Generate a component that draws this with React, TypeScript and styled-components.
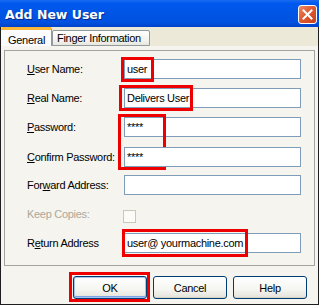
import React from 'react';
import styled, { createGlobalStyle } from 'styled-components';

const GlobalStyle = createGlobalStyle`
	html, body {
		margin: 0;
		padding: 0;
		background: #ffffff;
	}
	body {
		font-family: 'Liberation Sans', Arial, sans-serif;
		font-size: 11px;
		letter-spacing: -0.3px;
		color: #000;
	}
`;

interface RowDef {
	label: React.ReactNode;
	value?: string;
	disabled?: boolean;
	checkbox?: boolean;
	nudge?: number;
	mark?: { l: number; t: number; w: number; h: number };
}

const rows: RowDef[] = [
	{ label: <><u>U</u>ser Name:</>, value: 'user', mark: { l: -3, t: -2, w: 33, h: 25 } },
	{ label: <><u>R</u>eal Name:</>, value: 'Delivers User', mark: { l: -5, t: -3, w: 74, h: 26 } },
	{ label: <><u>P</u>assword:</>, value: '****', mark: { l: -6, t: -3, w: 48, h: 56 } },
	{ label: <><u>C</u>onfirm Password:</>, value: '****', nudge: 1 },
	{ label: <>For<u>w</u>ard Address:</>, value: '' },
	{ label: <>Keep Copies:</>, disabled: true, checkbox: true },
	{ label: <>R<u>e</u>turn Address</>, value: 'user@ yourmachine.com', mark: { l: -2, t: -4, w: 126, h: 28 } },
];

export default function App() {
	return (
		<>
			<GlobalStyle />
			<Window>
				<TitleBar>
					<Title>Add New User</Title>
					<CloseButton>
						<svg width='11' height='11' viewBox='0 0 11 11'>
							<path d='M1.5 1.5 L9.5 9.5 M9.5 1.5 L1.5 9.5' stroke='#fff' strokeWidth='2' strokeLinecap='square' />
						</svg>
					</CloseButton>
				</TitleBar>

				<Frame>
					<TabStrip>
						<Tab $active>General</Tab>
						<Tab>Finger Information</Tab>
					</TabStrip>

					<Body>
						<Panel>
							<Form>
								{rows.map((row, i) => (
									<React.Fragment key={i}>
										<Label $disabled={row.disabled} $nudge={row.nudge}>
											{row.label}
										</Label>
										<Cell $nudge={row.nudge}>
											{row.checkbox ? (
												<CheckBox />
											) : (
												<TextBox>{row.value}</TextBox>
											)}
											{row.mark && (
												<Highlight
													$l={row.mark.l}
													$t={row.mark.t}
													$w={row.mark.w}
													$h={row.mark.h}
												/>
											)}
										</Cell>
									</React.Fragment>
								))}
							</Form>
						</Panel>

						<ButtonBar>
							<ButtonSlot>
								<Button $default>OK</Button>
								<Highlight $l={-4} $t={-4} $w={81} $h={30} />
							</ButtonSlot>
							<Button>Cancel</Button>
							<Button>Help</Button>
						</ButtonBar>
					</Body>
				</Frame>
			</Window>
		</>
	);
}

const Window = styled.div`
	width: 319px;
	height: 305px;
	display: flex;
	flex-direction: column;
	overflow: hidden;
`;

const TitleBar = styled.div`
	height: 27px;
	flex: none;
	display: flex;
	align-items: center;
	justify-content: space-between;
	padding: 0 2px 0 5px;
	box-sizing: border-box;
	background: linear-gradient(
		#1a6cf0 0%,
		#0058ee 12%,
		#0055e5 50%,
		#0050de 85%,
		#0042c8 100%
	);
`;

const Title = styled.span`
	color: #fff;
	font-family: 'DejaVu Sans', 'Liberation Sans', sans-serif;
	font-weight: bold;
	font-size: 12.5px;
	letter-spacing: 0;
	text-shadow: 1px 1px 0 #0a2a8a;
	margin-top: 1px;
`;

const CloseButton = styled.div`
	width: 19px;
	height: 19px;
	box-sizing: border-box;
	border: 1px solid #fff;
	border-radius: 3px;
	background: linear-gradient(135deg, #ec8a6a 0%, #e05a32 45%, #c8401a 100%);
	display: flex;
	align-items: center;
	justify-content: center;
	margin-top: 1px;
`;

const Frame = styled.div`
	flex: 1;
	display: flex;
	flex-direction: column;
	border: 1px solid #1e1e1e;
	border-top: none;
`;

const TabStrip = styled.div`
	height: 19px;
	flex: none;
	display: flex;
	align-items: flex-end;
	background: #ece9d8;
`;

const Tab = styled.div<{ $active?: boolean }>`
	box-sizing: border-box;
	height: ${(p) => (p.$active ? '19px' : '16px')};
	width: ${(p) => (p.$active ? '51px' : '98px')};
	padding-left: ${(p) => (p.$active ? '7px' : '4px')};
	padding-top: ${(p) => (p.$active ? '4px' : '1px')};
	border: 1px solid #919b9c;
	border-top: ${(p) => (p.$active ? '3px solid #f9b838' : '1px solid #919b9c')};
	border-bottom: ${(p) => (p.$active ? 'none' : '1px solid #919b9c')};
	border-left: ${(p) => (p.$active ? 'none' : '1px solid #919b9c')};
	border-radius: 2px 2px 0 0;
	background: ${(p) =>
		p.$active ? '#fcfcfe' : 'linear-gradient(#ffffff, #f3f2ec 70%, #e6e5de)'};
	white-space: nowrap;
	font-size: 11px;
	line-height: 12px;
`;

const Body = styled.div`
	flex: 1;
	display: flex;
	flex-direction: column;
	background: #f5f4ef;
	padding: 4px 3px 0 3px;
`;

const Panel = styled.div`
	height: 216px;
	box-sizing: border-box;
	border: 1px solid #a3a49d;
	padding: 8px 0 0 22px;
`;

const Form = styled.div`
	display: grid;
	grid-template-columns: 97px 177px;
	grid-auto-rows: 20px;
	row-gap: 9px;
`;

const Label = styled.div<{ $disabled?: boolean; $nudge?: number }>`
	display: flex;
	align-items: center;
	white-space: nowrap;
	color: ${(p) => (p.$disabled ? '#aca899' : '#000')};
	margin-top: ${(p) => p.$nudge || 0}px;
`;

const Cell = styled.div<{ $nudge?: number }>`
	position: relative;
	display: flex;
	align-items: center;
	margin-top: ${(p) => p.$nudge || 0}px;
`;

const TextBox = styled.div`
	width: 100%;
	height: 20px;
	box-sizing: border-box;
	border: 1px solid #7f9db9;
	background: #fff;
	padding: 0 2px;
	display: flex;
	align-items: center;
	white-space: nowrap;
`;

const CheckBox = styled.div`
	width: 13px;
	height: 13px;
	box-sizing: border-box;
	border: 1px solid #cac8bb;
	background: #fbfbf8;
	margin-left: -1px;
	margin-top: 5px;
`;

const Highlight = styled.div<{ $l: number; $t: number; $w: number; $h: number }>`
	position: absolute;
	left: ${(p) => p.$l}px;
	top: ${(p) => p.$t}px;
	width: ${(p) => p.$w}px;
	height: ${(p) => p.$h}px;
	box-sizing: border-box;
	border: 3px solid #ee0000;
	pointer-events: none;
`;

const ButtonBar = styled.div`
	display: flex;
	justify-content: flex-end;
	gap: 6px;
	padding: 10px 8px 0 0;
`;

const ButtonSlot = styled.div`
	position: relative;
	display: flex;
`;

const Button = styled.div<{ $default?: boolean }>`
	width: 74px;
	height: 23px;
	box-sizing: border-box;
	border: 1px solid #003c74;
	border-radius: 3px;
	background: linear-gradient(#ffffff 0%, #f5f5f1 60%, #e3e1d8 100%);
	box-shadow: ${(p) =>
		p.$default
			? 'inset 0 0 0 1px #a9c3f0, inset 0 -1px 0 1px #7ba2e7'
			: 'inset 0 -1px 0 #d6d0c5'};
	display: flex;
	align-items: center;
	justify-content: center;
	font-size: 11px;
`;
